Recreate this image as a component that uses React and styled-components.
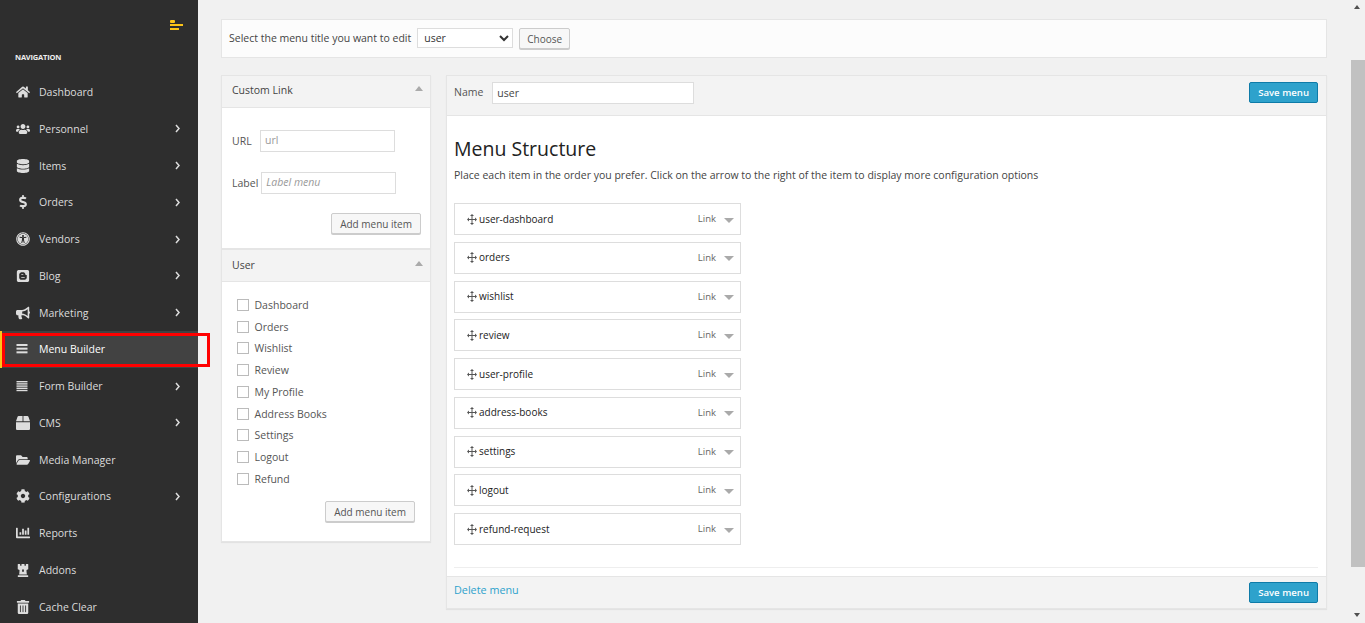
import React from "react";
import styled, { createGlobalStyle } from "styled-components";
import {
  FaHome,
  FaUsers,
  FaDatabase,
  FaDollarSign,
  FaUniversalAccess,
  FaBlogger,
  FaBullhorn,
  FaBox,
  FaFolderOpen,
  FaCog,
  FaChartBar,
  FaChessRook,
  FaTrashAlt,
} from "react-icons/fa";

const BarsIcon = ({ lines }) => {
  const gap = 11 / lines;
  return (
    <svg width="12" height="12" viewBox="0 0 12 12">
      {Array.from({ length: lines }).map((_, index) => (
        <rect
          key={index}
          x="0.5"
          y={1 + index * gap}
          width="11"
          height={lines > 3 ? 1.4 : 2}
          fill="currentColor"
        />
      ))}
    </svg>
  );
};

const MenuIcon = () => <BarsIcon lines={3} />;
const FormIcon = () => <BarsIcon lines={5} />;

const NAV_ITEMS = [
  { label: "Dashboard", icon: FaHome },
  { label: "Personnel", icon: FaUsers, more: true },
  { label: "Items", icon: FaDatabase, more: true },
  { label: "Orders", icon: FaDollarSign, more: true },
  { label: "Vendors", icon: FaUniversalAccess, more: true },
  { label: "Blog", icon: FaBlogger, more: true },
  { label: "Marketing", icon: FaBullhorn, more: true },
  { label: "Menu Builder", icon: MenuIcon, active: true },
  { label: "Form Builder", icon: FormIcon, more: true },
  { label: "CMS", icon: FaBox, more: true },
  { label: "Media Manager", icon: FaFolderOpen },
  { label: "Configurations", icon: FaCog, more: true },
  { label: "Reports", icon: FaChartBar },
  { label: "Addons", icon: FaChessRook },
  { label: "Cache Clear", icon: FaTrashAlt },
];

const USER_PAGES = [
  "Dashboard",
  "Orders",
  "Wishlist",
  "Review",
  "My Profile",
  "Address Books",
  "Settings",
  "Logout",
  "Refund",
];

const MENU_ITEMS = [
  "user-dashboard",
  "orders",
  "wishlist",
  "review",
  "user-profile",
  "address-books",
  "settings",
  "logout",
  "refund-request",
];

const MoveIcon = () => (
  <MoveSvg width="10" height="11" viewBox="0 0 10 11">
    <path d="M5 1v9M1 5.5h8" stroke="#555" strokeWidth="1" fill="none" />
    <path d="M5 0l2 2H3zM5 11l2-2H3zM0 5.5l2-2v4zM10 5.5l-2-2v4z" fill="#555" />
  </MoveSvg>
);

const App = () => {
  return (
    <Page>
      <GlobalStyle />
      <Sidebar>
        <SidebarTop>
          <ToggleIcon width="14" height="11" viewBox="0 0 14 11">
            <rect x="0" y="0" width="5" height="3" rx="1" fill="#fcc419" />
            <rect x="0" y="4" width="13" height="2" fill="#fcc419" />
            <rect x="0" y="8" width="9" height="2" fill="#fcc419" />
          </ToggleIcon>
        </SidebarTop>
        <NavTitle>NAVIGATION</NavTitle>
        <NavList>
          {NAV_ITEMS.map((item) => {
            const Icon = item.icon;
            return (
              <NavItem key={item.label} $active={item.active}>
                <NavIcon>
                  <Icon />
                </NavIcon>
                <NavLabel>{item.label}</NavLabel>
                {item.more && (
                  <NavChevron width="5" height="9" viewBox="0 0 5 9">
                    <path
                      d="M1 1l3 3.5L1 8"
                      stroke="#ddd"
                      strokeWidth="1.5"
                      fill="none"
                    />
                  </NavChevron>
                )}
              </NavItem>
            );
          })}
        </NavList>
        <Highlight />
      </Sidebar>

      <Main>
        <SelectBar>
          <SelectLabel>Select the menu title you want to edit</SelectLabel>
          <SelectBox defaultValue="user">
            <option value="user">user</option>
          </SelectBox>
          <ChooseButton>Choose</ChooseButton>
        </SelectBar>

        <Columns>
          <LeftColumn>
            <Box>
              <BoxHeader $lift>
                Custom Link
                <ArrowUp />
              </BoxHeader>
              <CustomLinkBody>
                <FieldRow>
                  <FieldLabel>URL</FieldLabel>
                  <TextInput placeholder="url" />
                </FieldRow>
                <FieldRow>
                  <FieldLabel>Label</FieldLabel>
                  <TextInput placeholder="Label menu" $italic />
                </FieldRow>
                <BoxActions>
                  <Button>Add menu item</Button>
                </BoxActions>
              </CustomLinkBody>
            </Box>
            <Box>
              <BoxHeader>
                User
                <ArrowUp />
              </BoxHeader>
              <UserBody>
                {USER_PAGES.map((page) => (
                  <CheckRow key={page}>
                    <CheckSquare />
                    {page}
                  </CheckRow>
                ))}
                <UserActions>
                  <Button>Add menu item</Button>
                </UserActions>
              </UserBody>
            </Box>
          </LeftColumn>

          <EditorPanel>
            <EditorHeader>
              <NameLabel>Name</NameLabel>
              <NameInput defaultValue="user" />
              <SaveButton>Save menu</SaveButton>
            </EditorHeader>
            <EditorBody>
              <Heading>Menu Structure</Heading>
              <Hint>
                Place each item in the order you prefer. Click on the arrow to
                the right of the item to display more configuration options
              </Hint>
              <MenuList>
                {MENU_ITEMS.map((item) => (
                  <MenuRow key={item}>
                    <MoveIcon />
                    <MenuName>{item}</MenuName>
                    <MenuType>Link</MenuType>
                    <ArrowDown />
                  </MenuRow>
                ))}
              </MenuList>
              <Divider />
            </EditorBody>
            <EditorFooter>
              <DeleteLink href="#">Delete menu</DeleteLink>
              <SaveButton>Save menu</SaveButton>
            </EditorFooter>
          </EditorPanel>
        </Columns>
      </Main>

      <Scrollbar>
        <ScrollArrow $up />
        <ScrollTrack>
          <ScrollThumb />
        </ScrollTrack>
        <ScrollArrow />
      </Scrollbar>
    </Page>
  );
};

const GlobalStyle = createGlobalStyle`
  html, body {
    margin: 0;
    height: 100%;
    overflow: hidden;
  }
  body {
    font-family: "Open Sans", "Liberation Sans", sans-serif;
    font-size: 10.5px;
    color: #444;
  }
  * {
    box-sizing: border-box;
  }
`;

const Page = styled.div`
  display: flex;
  width: 1365px;
  height: 623px;
  overflow: hidden;
  background: #f1f1f1;
`;

const Sidebar = styled.aside`
  position: relative;
  flex: 0 0 198px;
  background: #2e2e2e;
`;

const SidebarTop = styled.div`
  display: flex;
  justify-content: flex-end;
  height: 20px;
  padding: 20px 14px 0 0;
`;

const ToggleIcon = styled.svg`
  display: block;
`;

const NavTitle = styled.div`
  margin-top: 30px;
  padding-left: 15px;
  color: #eee;
  font-size: 7.5px;
  font-weight: 700;
  letter-spacing: -0.2px;
  line-height: 14px;
`;

const NavList = styled.ul`
  margin: 9.6px 0 0;
  padding: 0;
  list-style: none;
`;

const NavItem = styled.li`
  display: flex;
  align-items: center;
  height: 36.78px;
  padding-left: ${(p) => (p.$active ? "14px" : "16px")};
  border-left: ${(p) => (p.$active ? "2px solid #fcc419" : "none")};
  background: ${(p) => (p.$active ? "#424242" : "transparent")};
  color: ${(p) => (p.$active ? "#fff" : "#dcdcdc")};
`;

const NavIcon = styled.span`
  display: flex;
  align-items: center;
  flex: 0 0 23px;
  font-size: 14px;
  color: #ddd;
`;

const NavLabel = styled.span`
  flex: 1;
  font-size: 10.5px;
`;

const NavChevron = styled.svg`
  flex: none;
  margin-right: 18px;
`;

const Highlight = styled.div`
  position: absolute;
  top: 333px;
  left: 2px;
  width: 208px;
  height: 34px;
  border: 3px solid #f00;
  z-index: 2;
`;

const Main = styled.main`
  flex: 1;
  padding: 19px 23px 0;
`;

const SelectBar = styled.div`
  display: flex;
  align-items: flex-start;
  gap: 6px;
  height: 39px;
  padding: 8px 7px 0;
  background: #fcfcfc;
  border: 1px solid #e5e5e5;
`;

const SelectLabel = styled.span`
  line-height: 20px;
`;

const SelectBox = styled.select`
  width: 96px;
  height: 20px;
  padding: 0 2px;
  border: 1px solid #ddd;
  border-radius: 0;
  background: #fff;
  color: #333;
  font-family: inherit;
  font-size: 10.5px;
`;

const Button = styled.button`
  height: 21px;
  padding: 0 8px;
  border: 1px solid #ccc;
  border-radius: 2px;
  background: #f7f7f7;
  box-shadow: 0 1px 0 #ccc;
  color: #555;
  font-family: inherit;
  font-size: 10px;
  white-space: nowrap;
`;

const ChooseButton = styled(Button)`
  padding: 0 7px;
`;

const Columns = styled.div`
  display: flex;
  align-items: flex-start;
  gap: 15px;
  margin-top: 17px;
`;

const LeftColumn = styled.div`
  flex: 0 0 210px;
`;

const Box = styled.section`
  border: 1px solid #e5e5e5;
  background: #fff;
  box-shadow: 0 1px 1px rgba(0, 0, 0, 0.06);
`;

const BoxHeader = styled.div`
  display: flex;
  align-items: center;
  justify-content: space-between;
  height: 32px;
  padding: 0 7px ${(p) => (p.$lift ? "4px" : "2px")} 10px;
  background: #f3f3f3;
  border-bottom: 1px solid #e5e5e5;
  color: #444;
`;

const ArrowUp = styled.span`
  width: 0;
  height: 0;
  margin-bottom: 3px;
  border-left: 4.5px solid transparent;
  border-right: 4.5px solid transparent;
  border-bottom: 5px solid #aaa;
`;

const ArrowDown = styled.span`
  width: 0;
  height: 0;
  margin: 2px 0 0 8px;
  border-left: 5px solid transparent;
  border-right: 5px solid transparent;
  border-top: 5px solid #aaa;
`;

const CustomLinkBody = styled.div`
  height: 140px;
  padding: 22px 9px 0 10px;
`;

const FieldRow = styled.div`
  display: flex;
  align-items: center;
  gap: 3px;
  height: 22px;
  margin-bottom: 20px;
`;

const FieldLabel = styled.label`
  min-width: 25px;
  color: #555;
`;

const TextInput = styled.input`
  width: 135px;
  height: 22px;
  padding: 0 4px 2px;
  border: 1px solid #ddd;
  background: #fff;
  font-family: inherit;
  font-size: 10.5px;
  color: #555;
  &::placeholder {
    color: #999;
    font-style: ${(p) => (p.$italic ? "italic" : "normal")};
    opacity: 1;
  }
`;

const BoxActions = styled.div`
  display: flex;
  justify-content: flex-end;
  margin-top: -1px;
`;

const UserBody = styled.div`
  padding: 12px 15px 19px;
`;

const CheckRow = styled.div`
  display: flex;
  align-items: center;
  gap: 5.5px;
  height: 21.75px;
  color: #555;
`;

const CheckSquare = styled.span`
  width: 12px;
  height: 12px;
  border: 1px solid #bbb;
  background: #fff;
`;

const UserActions = styled.div`
  display: flex;
  justify-content: flex-end;
  margin-top: 11.5px;
`;

const EditorPanel = styled.section`
  flex: 1;
  border: 1px solid #e5e5e5;
  background: #fff;
  box-shadow: 0 1px 1px rgba(0, 0, 0, 0.06);
`;

const EditorHeader = styled.div`
  display: flex;
  align-items: center;
  height: 40px;
  padding: 0 8px 7px 7px;
  background: #f3f3f3;
  border-bottom: 1px solid #e5e5e5;
`;

const NameLabel = styled.span`
  margin-right: 9px;
  color: #555;
`;

const NameInput = styled.input`
  width: 202px;
  height: 22px;
  margin-top: 2px;
  padding: 0 4px;
  border: 1px solid #ddd;
  background: #fff;
  color: #444;
  font-family: inherit;
  font-size: 10.5px;
`;

const SaveButton = styled.button`
  height: 21px;
  margin-left: auto;
  padding: 0 8px;
  border: 1px solid #0e7ba8;
  border-radius: 2px;
  background: #2ea2cc;
  color: #fff;
  font-family: inherit;
  font-size: 9.6px;
  font-weight: 600;
`;

const EditorBody = styled.div`
  padding: 19px 8px 0 7px;
`;

const Heading = styled.h2`
  margin: 0;
  color: #222;
  font-size: 19.5px;
  font-weight: 400;
  line-height: 27px;
`;

const Hint = styled.p`
  margin: 5px 0 0;
  color: #444;
  font-size: 10.5px;
  line-height: 16px;
`;

const MenuList = styled.div`
  display: flex;
  flex-direction: column;
  gap: 6.75px;
  width: 287px;
  margin-top: 20px;
`;

const MenuRow = styled.div`
  display: flex;
  align-items: center;
  height: 32px;
  padding: 0 6px 0 12px;
  border: 1px solid #ddd;
  background: #fff;
`;

const MoveSvg = styled.svg`
  flex: none;
  margin-right: 2px;
`;

const MenuName = styled.span`
  flex: 1;
  margin-bottom: 1px;
  color: #222;
  font-size: 10px;
  font-weight: 500;
`;

const MenuType = styled.span`
  margin-bottom: 1px;
  color: #666;
  font-size: 9.5px;
`;

const Divider = styled.div`
  height: 1px;
  margin-top: 22px;
  background: #eee;
`;

const EditorFooter = styled.div`
  display: flex;
  align-items: center;
  height: 32px;
  margin-top: 8px;
  padding: 0 8px 0 7px;
  background: #f3f3f3;
  border-top: 1px solid #e5e5e5;
`;

const DeleteLink = styled.a`
  margin-bottom: 6px;
  color: #2ea2cc;
  font-size: 10.8px;
  text-decoration: none;
`;

const Scrollbar = styled.div`
  display: flex;
  flex-direction: column;
  flex: 0 0 15px;
  background: #f1f1f1;
`;

const ScrollArrow = styled.div`
  flex: 0 0 15px;
  position: relative;
  &::after {
    content: "";
    position: absolute;
    left: 4px;
    top: 5px;
    border-left: 3.5px solid transparent;
    border-right: 3.5px solid transparent;
    ${(p) =>
      p.$up ? "border-bottom: 4px solid #505050;" : "border-top: 4px solid #505050;"}
  }
`;

const ScrollTrack = styled.div`
  flex: 1;
  padding: 45px 0 41px 1px;
`;

const ScrollThumb = styled.div`
  height: 100%;
  background: #c1c1c1;
`;

export default App;
